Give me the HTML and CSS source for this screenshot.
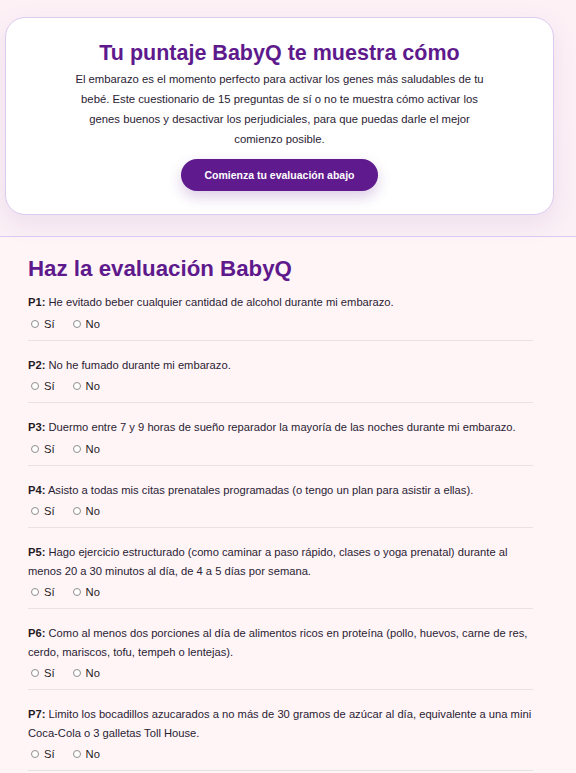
FILE: index.html
```html
<!DOCTYPE html>
<html lang="es">
<head>
<meta charset="utf-8">
<title>BabyQ</title>
<link rel="stylesheet" href="styles.css">
</head>
<body>
<section class="hero">
  <div class="card">
    <h1 class="card-title">Tu puntaje BabyQ te muestra cómo</h1>
    <p class="card-text">El embarazo es el momento perfecto para activar los genes más saludables de tu bebé. Este cuestionario de 15 preguntas de sí o no te muestra cómo activar los genes buenos y desactivar los perjudiciales, para que puedas darle el mejor comienzo posible.</p>
    <a class="btn" href="#quiz">Comienza tu evaluación abajo</a>
  </div>
</section>
<section class="quiz" id="quiz">
  <h2 class="quiz-title">Haz la evaluación BabyQ</h2>
  <div class="q">
    <p class="q-text"><b>P1:</b> He evitado beber cualquier cantidad de alcohol durante mi embarazo.</p>
    <div class="opts"><label class="opt"><input type="radio" name="q1"> Sí</label><label class="opt"><input type="radio" name="q1"> No</label></div>
  </div>
  <div class="q">
    <p class="q-text"><b>P2:</b> No he fumado durante mi embarazo.</p>
    <div class="opts"><label class="opt"><input type="radio" name="q2"> Sí</label><label class="opt"><input type="radio" name="q2"> No</label></div>
  </div>
  <div class="q">
    <p class="q-text"><b>P3:</b> Duermo entre 7 y 9 horas de sueño reparador la mayoría de las noches durante mi embarazo.</p>
    <div class="opts"><label class="opt"><input type="radio" name="q3"> Sí</label><label class="opt"><input type="radio" name="q3"> No</label></div>
  </div>
  <div class="q">
    <p class="q-text"><b>P4:</b> Asisto a todas mis citas prenatales programadas (o tengo un plan para asistir a ellas).</p>
    <div class="opts"><label class="opt"><input type="radio" name="q4"> Sí</label><label class="opt"><input type="radio" name="q4"> No</label></div>
  </div>
  <div class="q">
    <p class="q-text"><b>P5:</b> Hago ejercicio estructurado (como caminar a paso rápido, clases o yoga prenatal) durante al menos 20 a 30 minutos al día, de 4 a 5 días por semana.</p>
    <div class="opts"><label class="opt"><input type="radio" name="q5"> Sí</label><label class="opt"><input type="radio" name="q5"> No</label></div>
  </div>
  <div class="q">
    <p class="q-text"><b>P6:</b> Como al menos dos porciones al día de alimentos ricos en proteína (pollo, huevos, carne de res, cerdo, mariscos, tofu, tempeh o lentejas).</p>
    <div class="opts"><label class="opt"><input type="radio" name="q6"> Sí</label><label class="opt"><input type="radio" name="q6"> No</label></div>
  </div>
  <div class="q">
    <p class="q-text"><b>P7:</b> Limito los bocadillos azucarados a no más de 30 gramos de azúcar al día, equivalente a una mini Coca-Cola o 3 galletas Toll House.</p>
    <div class="opts"><label class="opt"><input type="radio" name="q7"> Sí</label><label class="opt"><input type="radio" name="q7"> No</label></div>
  </div>
</section>
</body>
</html>
```
FILE: styles.css
```css
* { box-sizing: border-box; }
html, body { margin: 0; padding: 0; }
body {
  background: #fff5f7;
  font-family: "Liberation Sans", Arial, sans-serif;
  color: #2a2233;
}
.hero {
  padding: 17px 22px 21px 5px;
  background: linear-gradient(180deg, #fdf1f6 0%, #fbf0f6 100%);
  border-bottom: 1px solid #dccbf0;
}
.card {
  background: #fff;
  border: 1px solid #dccbf0;
  border-radius: 20px;
  padding: 20px 40px 23px;
  text-align: center;
  box-shadow: 0 8px 24px rgba(120, 60, 160, 0.10);
}
.card-title {
  margin: 0;
  font-size: 21.5px;
  font-weight: bold;
  color: #5e1a8c;
  line-height: 30px;
}
.card-text {
  margin: 1px auto 0;
  max-width: 418px;
  font-size: 11.3px;
  line-height: 20px;
  color: #2a2233;
}
.btn {
  display: inline-block;
  margin-top: 10px;
  padding: 0 24px;
  height: 32px;
  line-height: 32px;
  border-radius: 16px;
  background: #5f1a8d;
  color: #fff;
  font-size: 10.5px;
  font-weight: bold;
  text-decoration: none;
  box-shadow: 0 6px 14px rgba(95, 26, 141, 0.22);
}
.quiz {
  padding: 18px 0 0 28px;
  width: 533px;
}
.quiz-title {
  margin: 0 0 10px;
  font-size: 22.3px;
  line-height: 28px;
  color: #5e1a8c;
  font-weight: bold;
}
.q {
  border-bottom: 1px solid #e8e2e4;
  padding-bottom: 8px;
  margin-bottom: 15px;
}
.q-text {
  margin: 0;
  font-size: 11.2px;
  line-height: 18.5px;
  color: #2a2233;
}
.q-text b { color: #1f1a24; }
.opts {
  display: flex;
  gap: 18px;
  margin-top: 4px;
  padding-left: 3px;
}
.opt {
  display: flex;
  align-items: center;
  gap: 5px;
  font-size: 11.2px;
  line-height: 16px;
  color: #1f1a24;
}
.opt input {
  -webkit-appearance: none;
  appearance: none;
  margin: 0;
  width: 8px;
  height: 8px;
  border: 1px solid #8f8f8f;
  border-radius: 50%;
  background: #fff;
}
```
